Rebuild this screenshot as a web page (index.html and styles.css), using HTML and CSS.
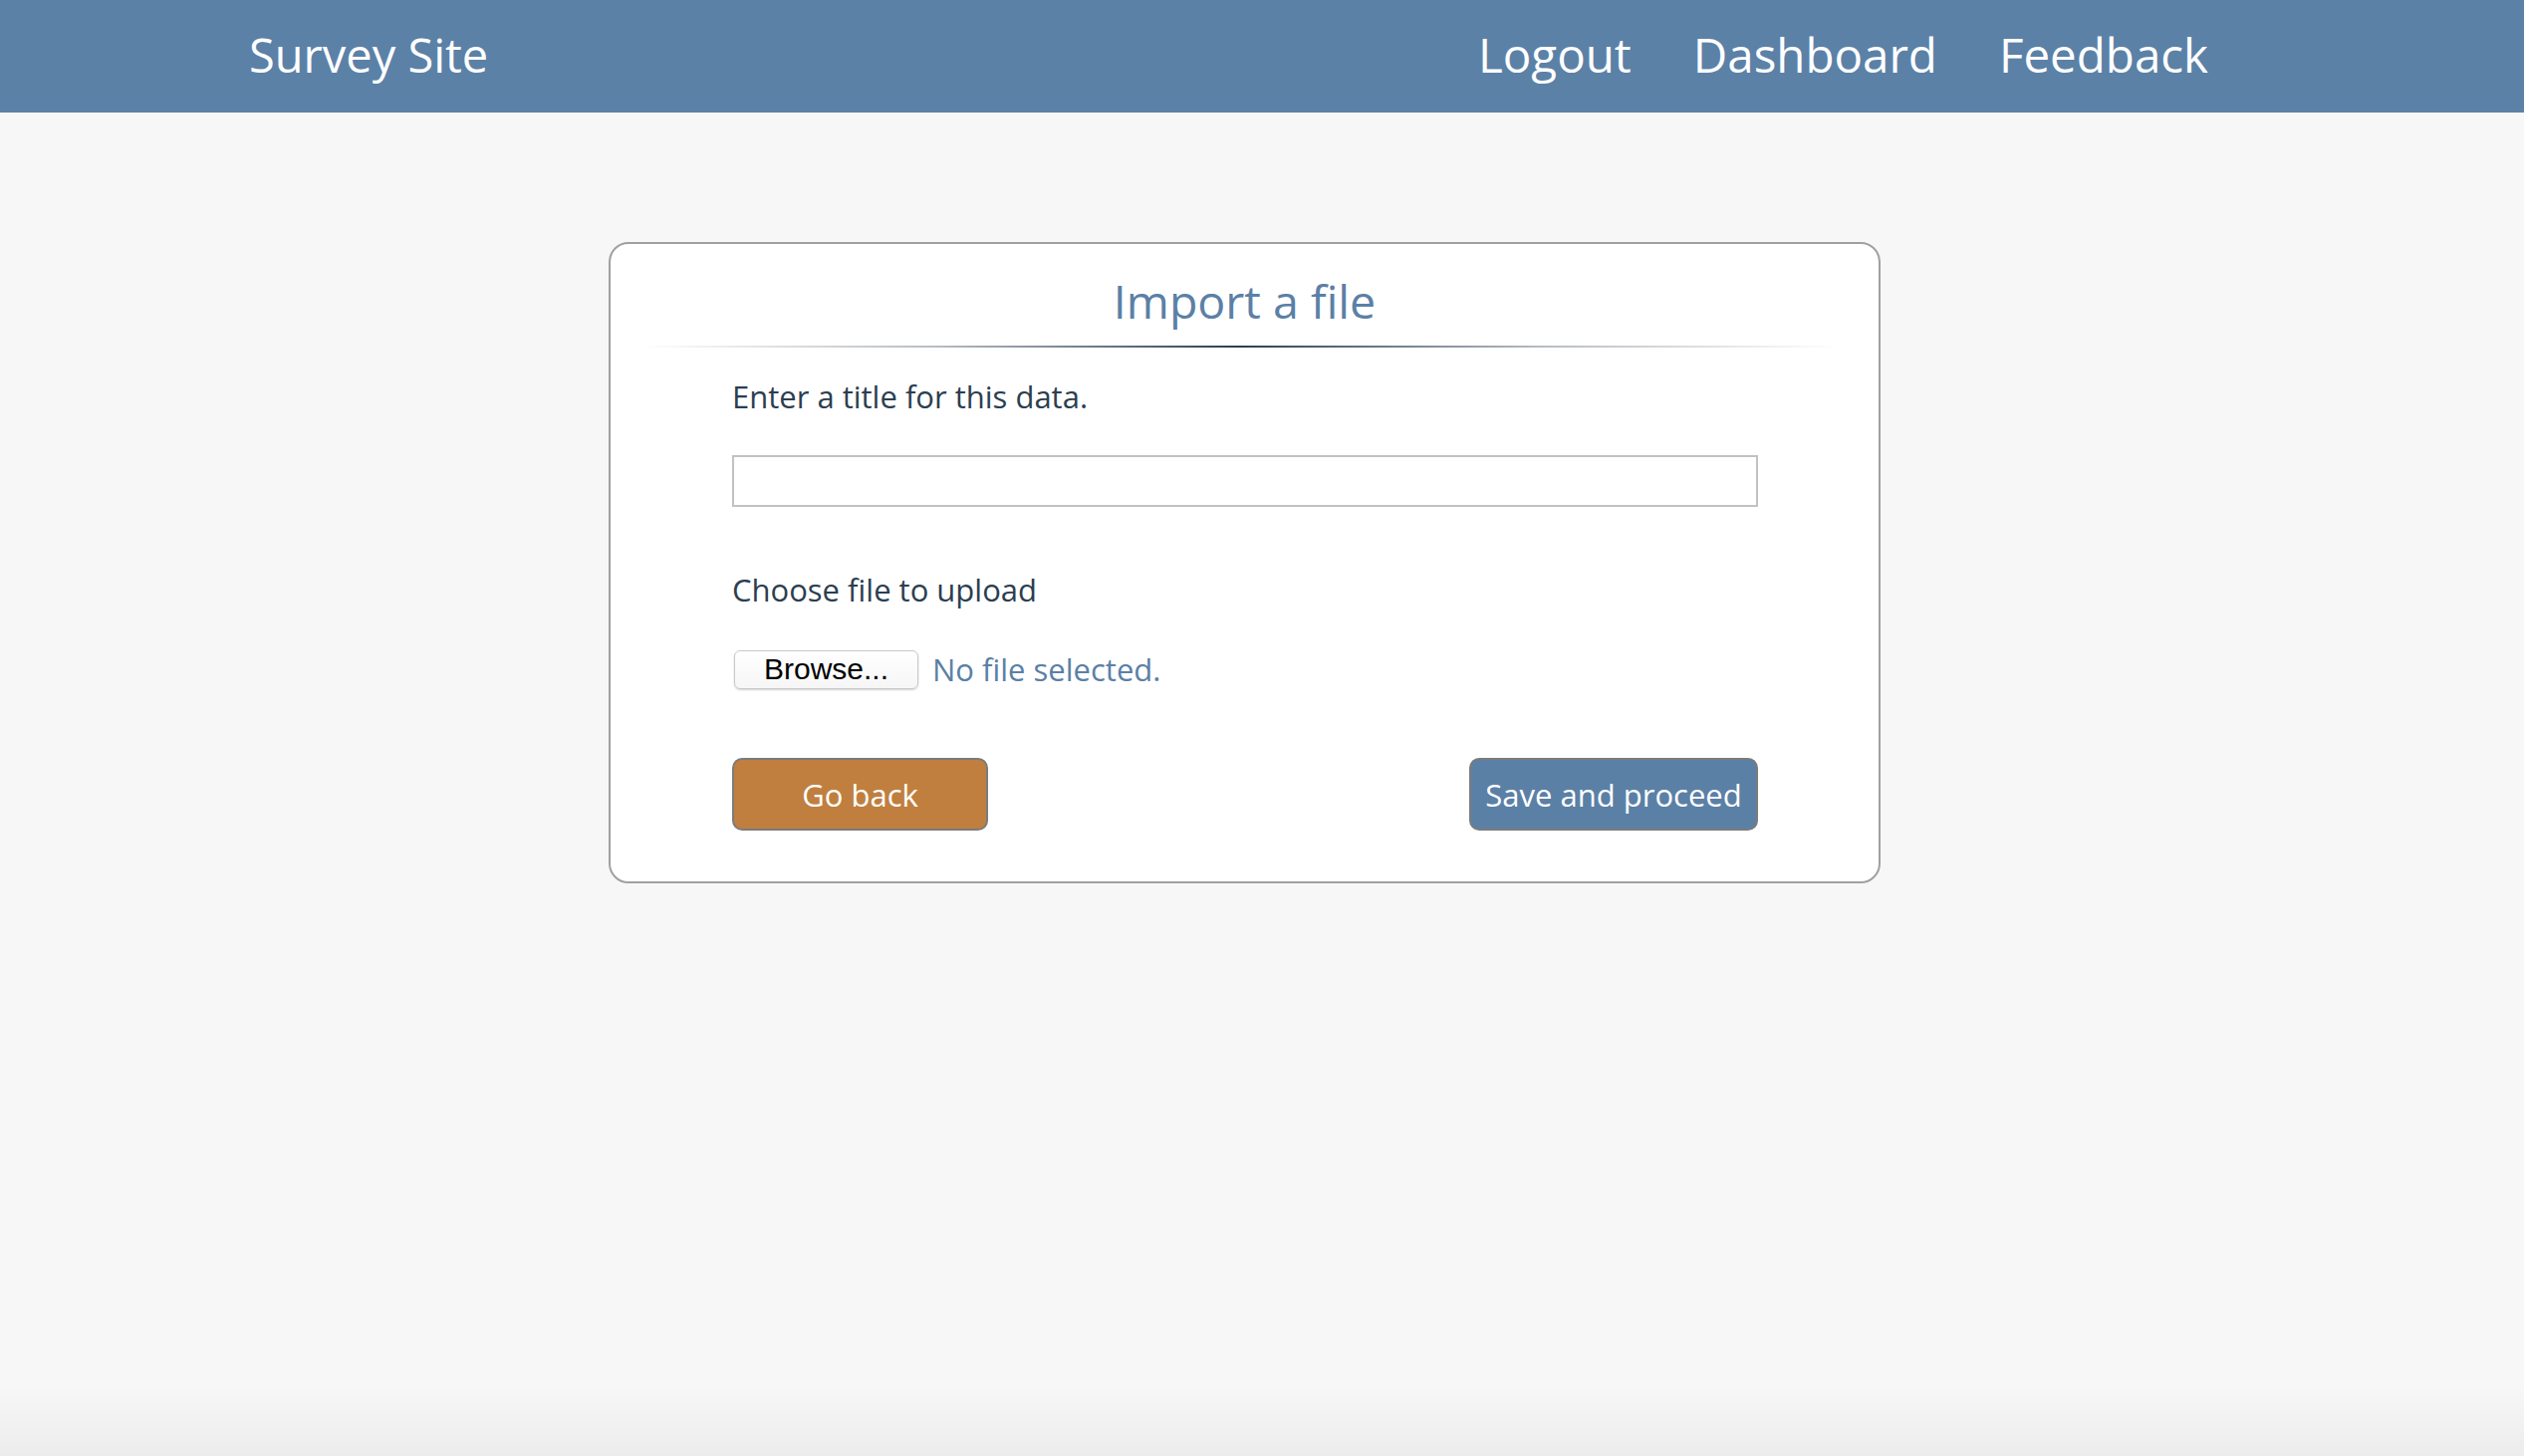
FILE: index.html
```html
<!DOCTYPE html>
<html lang="en">
<head>
<meta charset="utf-8">
<title>Import a file - Survey Site</title>
<link rel="stylesheet" href="styles.css">
</head>
<body>
<div class="page">
  <header class="topbar">
    <a class="brand" href="#">Survey Site</a>
    <nav class="nav">
      <a href="#">Logout</a>
      <a href="#">Dashboard</a>
      <a href="#">Feedback</a>
    </nav>
  </header>
  <main class="main">
    <section class="card">
      <div class="card-head">
        <h1 class="title">Import a file</h1>
        <div class="divider"></div>
      </div>
      <form class="card-body">
        <label class="label">Enter a title for this data.</label>
        <input class="text-input" type="text">
        <label class="label label-file">Choose file to upload</label>
        <div class="file-row">
          <button type="button" class="browse">Browse...</button>
          <span class="file-status">No file selected.</span>
        </div>
        <div class="actions">
          <button type="button" class="btn btn-back">Go back</button>
          <button type="button" class="btn btn-save">Save and proceed</button>
        </div>
      </form>
    </section>
  </main>
  <footer class="footer"></footer>
</div>
</body>
</html>
```
FILE: styles.css
```css
* { box-sizing: border-box; }
html, body { margin: 0; padding: 0; }
body {
  background: #f7f7f7;
  font-family: "Open Sans", "Noto Sans", sans-serif;
  font-weight: 500;
  color: #2c3e50;
}
.page {
  min-height: 100vh;
  display: flex;
  flex-direction: column;
}
.topbar {
  height: 113px;
  background: #5b81a7;
  display: flex;
  align-items: center;
  justify-content: space-between;
  padding: 0 317px 4px 250px;
}
.brand {
  color: #fff;
  text-decoration: none;
  font-size: 47px;
  line-height: 60px;
}
.nav {
  display: flex;
  gap: 62px;
}
.nav a {
  color: #fff;
  text-decoration: none;
  font-size: 47.5px;
  line-height: 60px;
}
.main { flex: 1; }
.card {
  width: 1277px;
  margin: 130px 0 0 611px;
  background: #fff;
  border: 2px solid #a0a0a0;
  border-radius: 20px;
}
.card-head {
  padding: 27px 0 0;
}
.title {
  margin: 0;
  text-align: center;
  font-weight: 500;
  font-size: 46.5px;
  line-height: 60px;
  color: #5b80a6;
  padding-bottom: 15px;
}
.divider {
  height: 2px;
  margin: 0 40px 0 30px;
  background: linear-gradient(to right, rgba(44,62,80,0) 0%, rgba(44,62,80,0.35) 25%, #2c3e50 50%, rgba(44,62,80,0.35) 75%, rgba(44,62,80,0) 100%);
}
.card-body {
  padding: 29px 121px 51px 122px;
  display: flex;
  flex-direction: column;
  margin: 0;
}
.label {
  display: block;
  font-size: 31px;
  line-height: 40px;
  color: #2c3e50;
}
.text-input {
  margin-top: 39px;
  height: 52px;
  width: 100%;
  border: 2px solid #c2c2c2;
  background: #fff;
  font-size: 28px;
  padding: 0 12px;
  outline: none;
}
.label-file { margin-top: 63px; }
.file-row {
  margin-top: 40px;
  display: flex;
  align-items: center;
  height: 40px;
}
.browse {
  width: 185px;
  height: 39px;
  margin-left: 2px;
  padding: 0;
  border: 1px solid #c9c9c9;
  border-radius: 6px;
  background: linear-gradient(#ffffff, #f6f6f6);
  box-shadow: 0 1px 2px rgba(0,0,0,0.18);
  font-family: "Liberation Sans", Arial, sans-serif;
  font-size: 30px;
  color: #000;
}
.file-status {
  margin-left: 14px;
  font-size: 31px;
  line-height: 40px;
  color: #5b80a6;
}
.actions {
  margin-top: 69px;
  display: flex;
  justify-content: space-between;
}
.btn {
  height: 73px;
  border: 2px solid #7b7b7b;
  border-radius: 10px;
  color: #fff;
  font-family: "Open Sans", "Noto Sans", sans-serif;
  font-weight: 500;
  font-size: 31px;
  padding: 0;
}
.btn-back {
  width: 257px;
  background: #c07f3f;
}
.btn-save {
  width: 290px;
  background: #5b80a6;
}
.footer {
  height: 70px;
  background: linear-gradient(#f7f7f7, #ececec);
}
```
